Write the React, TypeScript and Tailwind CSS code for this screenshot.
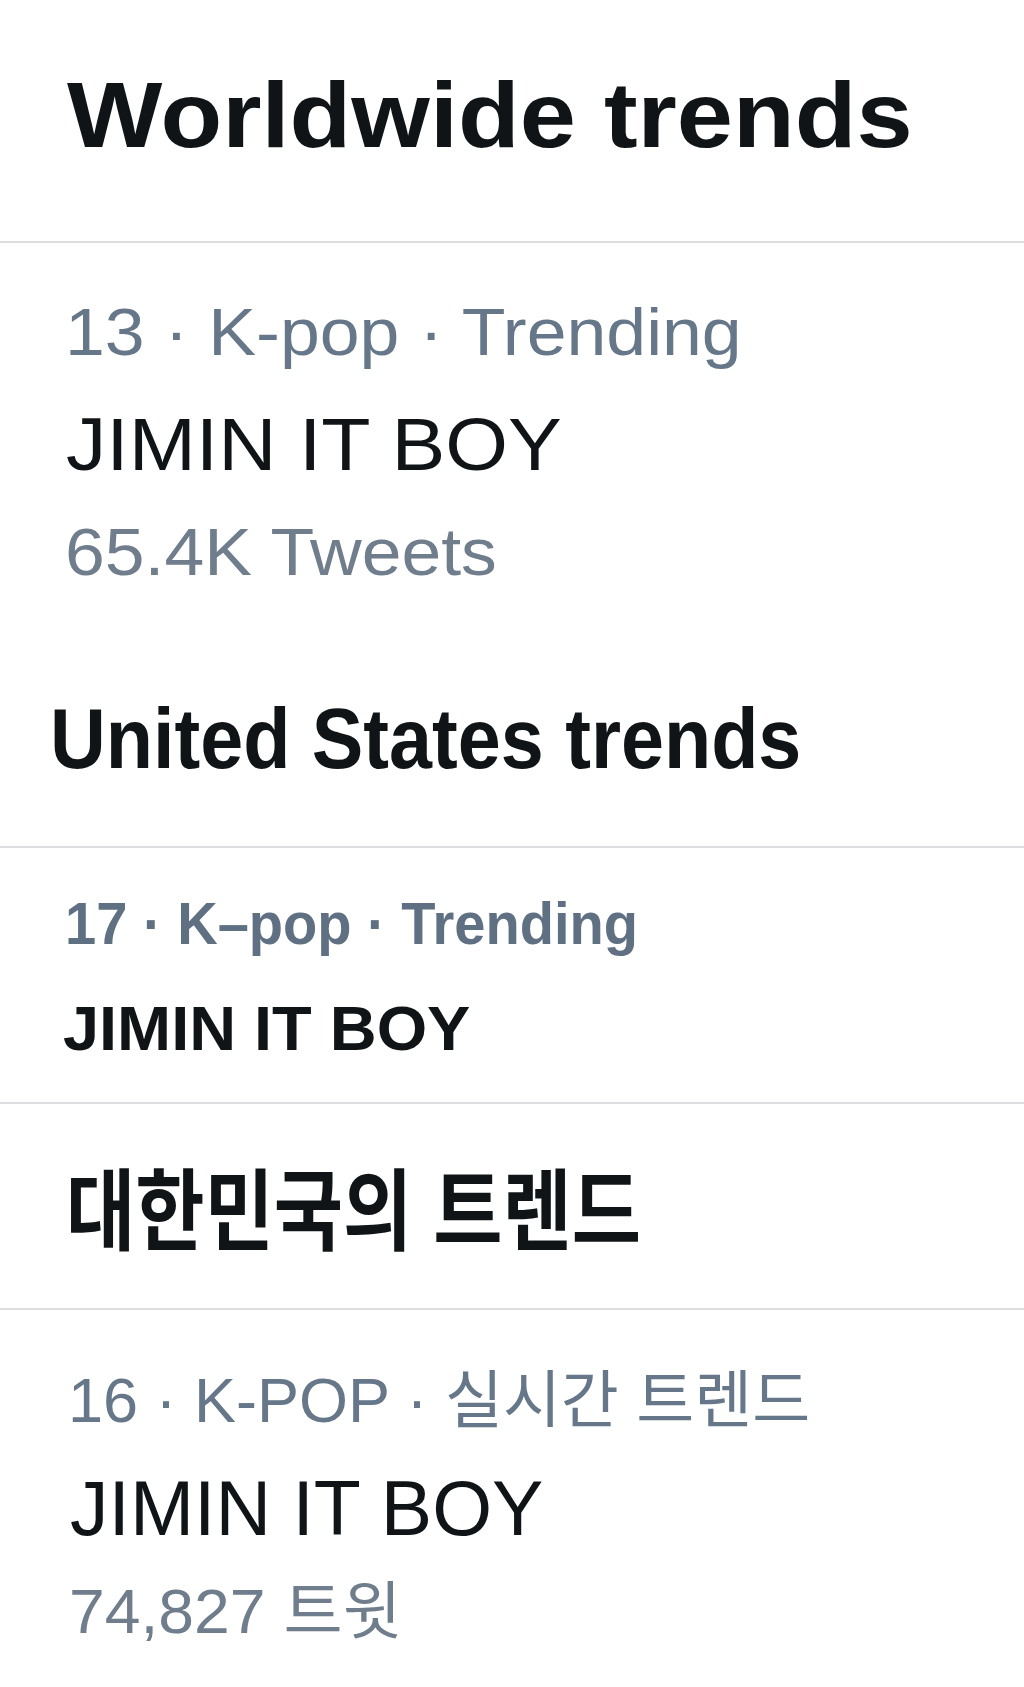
export default function App() {
  return (
    <div className="min-h-[1687px] overflow-hidden bg-white pt-[69px] font-['Liberation_Sans','Noto_Sans_CJK_KR',sans-serif] leading-none text-[#111417] whitespace-nowrap">
      {/* Worldwide */}
      <section>
        <h2 className="ml-[67px] w-max origin-left scale-x-[1.098] text-[92px] font-bold">
          Worldwide trends
        </h2>
        <div className="mt-[80px] h-[2px] bg-[#dcdce1]" />
        <div className="ml-[65px] mt-[56px] w-max origin-left scale-x-[1.085] text-[66px] text-[#66778a]">
          13 · K-pop · Trending
        </div>
        <div className="ml-[66px] mt-[42px] w-max origin-left scale-x-[1.075] text-[75px]">
          JIMIN IT BOY
        </div>
        <div className="ml-[65px] mt-[36px] w-max origin-left scale-x-[1.067] text-[67px] text-[#6f7d8c]">
          65.4K Tweets
        </div>
      </section>

      {/* United States */}
      <section>
        <h2 className="ml-[50px] mt-[111px] w-max origin-left scale-x-[0.909] text-[85px] font-bold">
          United States trends
        </h2>
        <div className="mt-[65px] h-[2px] bg-[#dcdce1]" />
        <div className="ml-[65px] mt-[47px] w-max origin-left scale-x-[0.95] text-[59px] font-bold text-[#5f7083]">
          17 · K–pop · Trending
        </div>
        <div className="ml-[63px] mt-[43px] w-max origin-left scale-x-[1.03] text-[63px] font-bold">
          JIMIN IT BOY
        </div>
        <div className="mt-[42px] h-[2px] bg-[#dcdce1]" />
      </section>

      {/* Korea */}
      <section>
        <h2 className="ml-[66px] mt-[64px] w-max origin-left scale-x-[0.846] text-[89px] font-bold">
          대한민국의 트렌드
        </h2>
        <div className="mt-[51px] h-[2px] bg-[#dcdce1]" />
        <div className="ml-[68px] mt-[59px] w-max text-[63px] text-[#66778a]">
          16 · K-POP · 실시간 트렌드
        </div>
        <div className="ml-[70px] mt-[38px] w-max text-[77px]">JIMIN IT BOY</div>
        <div className="ml-[69px] mt-[33px] w-max origin-left scale-x-[1.02] text-[63px] text-[#6f7d8c]">
          74,827 트윗
        </div>
      </section>
    </div>
  );
}
